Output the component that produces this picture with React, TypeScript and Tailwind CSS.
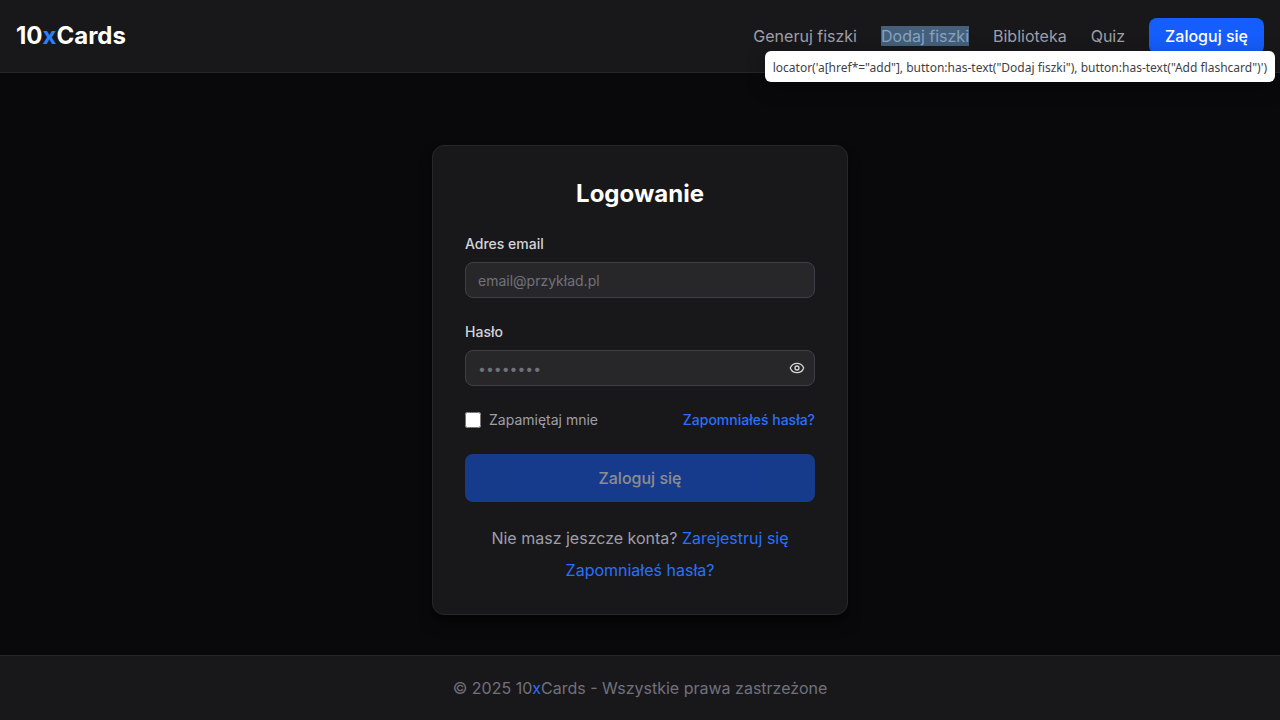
import { useState } from "react";
import { Eye } from "lucide-react";

const inputClass =
  "block h-9 w-full rounded-lg border border-zinc-700 bg-zinc-800 px-3 py-1 text-sm text-white placeholder:text-zinc-500 outline-none focus:border-blue-600";

function Header() {
  return (
    <header className="relative border-b border-zinc-800 bg-zinc-900">
      <div className="flex min-h-18 items-center justify-between px-4">
        <a href="/" className="text-2xl font-bold text-white">
          10<span className="text-blue-500">x</span>Cards
        </a>
        <nav className="flex items-center gap-6 text-zinc-400">
          <a href="/generate">Generuj fiszki</a>
          <div>
            <a href="/add" className="relative">
              Dodaj fiszki
              <span className="pointer-events-none absolute inset-0 bg-[#6fa8dc]/50" />
            </a>
          </div>
          <a href="/library">Biblioteka</a>
          <a href="/quiz">Quiz</a>
          <a
            href="/login"
            className="flex h-9 items-center rounded-lg bg-blue-600 px-4 font-medium text-white"
          >
            Zaloguj się
          </a>
        </nav>
      </div>
      <div
        role="tooltip"
        className="absolute top-[51px] right-[5px] z-10 rounded-md bg-white px-2 pt-[7px] pb-[5px] font-['Noto_Sans',sans-serif] text-[12px] leading-[19px] whitespace-nowrap text-zinc-700 shadow-[0_5px_20px_rgba(0,0,0,0.3)]"
      >
        {`locator('a[href*="add"], button:has-text("Dodaj fiszki"), button:has-text("Add flashcard")')`}
      </div>
    </header>
  );
}

function LoginForm() {
  const [visible, setVisible] = useState(false);
  return (
    <form className="flex flex-col gap-6" onSubmit={(e) => e.preventDefault()}>
      <div className="flex flex-col gap-2">
        <label htmlFor="email" className="text-sm font-medium text-zinc-300">
          Adres email
        </label>
        <input id="email" type="email" placeholder="email@przykład.pl" className={inputClass} />
      </div>
      <div className="flex flex-col gap-2">
        <label htmlFor="password" className="text-sm font-medium text-zinc-300">
          Hasło
        </label>
        <div className="relative">
          <input
            id="password"
            type={visible ? "text" : "password"}
            placeholder="••••••••"
            className={inputClass}
          />
          <button
            type="button"
            aria-label="Pokaż hasło"
            onClick={() => setVisible(!visible)}
            className="absolute inset-y-0 right-0 flex items-center px-2.5 text-zinc-300"
          >
            <Eye className="size-4" />
          </button>
        </div>
      </div>
      <div className="flex items-center justify-between text-sm">
        <label htmlFor="remember" className="flex items-center gap-2 text-zinc-400">
          <input id="remember" type="checkbox" className="size-4" />
          Zapamiętaj mnie
        </label>
        <a href="/forgot-password" className="font-medium text-[#2970ff]">
          Zapomniałeś hasła?
        </a>
      </div>
      <button
        type="submit"
        disabled
        className="h-12 w-full rounded-lg bg-blue-600 font-medium text-white disabled:opacity-50"
      >
        Zaloguj się
      </button>
    </form>
  );
}

export default function App() {
  return (
    <div className="flex min-h-screen flex-col bg-zinc-950 font-['Inter',sans-serif] text-white">
      <Header />
      <main className="flex flex-1 flex-col items-center px-4 pt-18 pb-10">
        <section className="w-full max-w-104 rounded-xl border border-zinc-800 bg-zinc-900 p-8 shadow-lg shadow-black/50">
          <h1 className="mb-6 text-center text-2xl font-bold">Logowanie</h1>
          <LoginForm />
          <div className="mt-6 flex flex-col items-center gap-2 text-zinc-400">
            <p>
              Nie masz jeszcze konta?{" "}
              <a href="/register" className="text-[#2970ff]">
                Zarejestruj się
              </a>
            </p>
            <a href="/reset-password" className="text-[#2970ff]">
              Zapomniałeś hasła?
            </a>
          </div>
        </section>
      </main>
      <footer className="border-t border-zinc-800 bg-zinc-900 px-4 py-5 text-center text-zinc-500">
        © 2025 10<span className="text-[#2970ff]">x</span>Cards - Wszystkie prawa zastrzeżone
      </footer>
    </div>
  );
}
